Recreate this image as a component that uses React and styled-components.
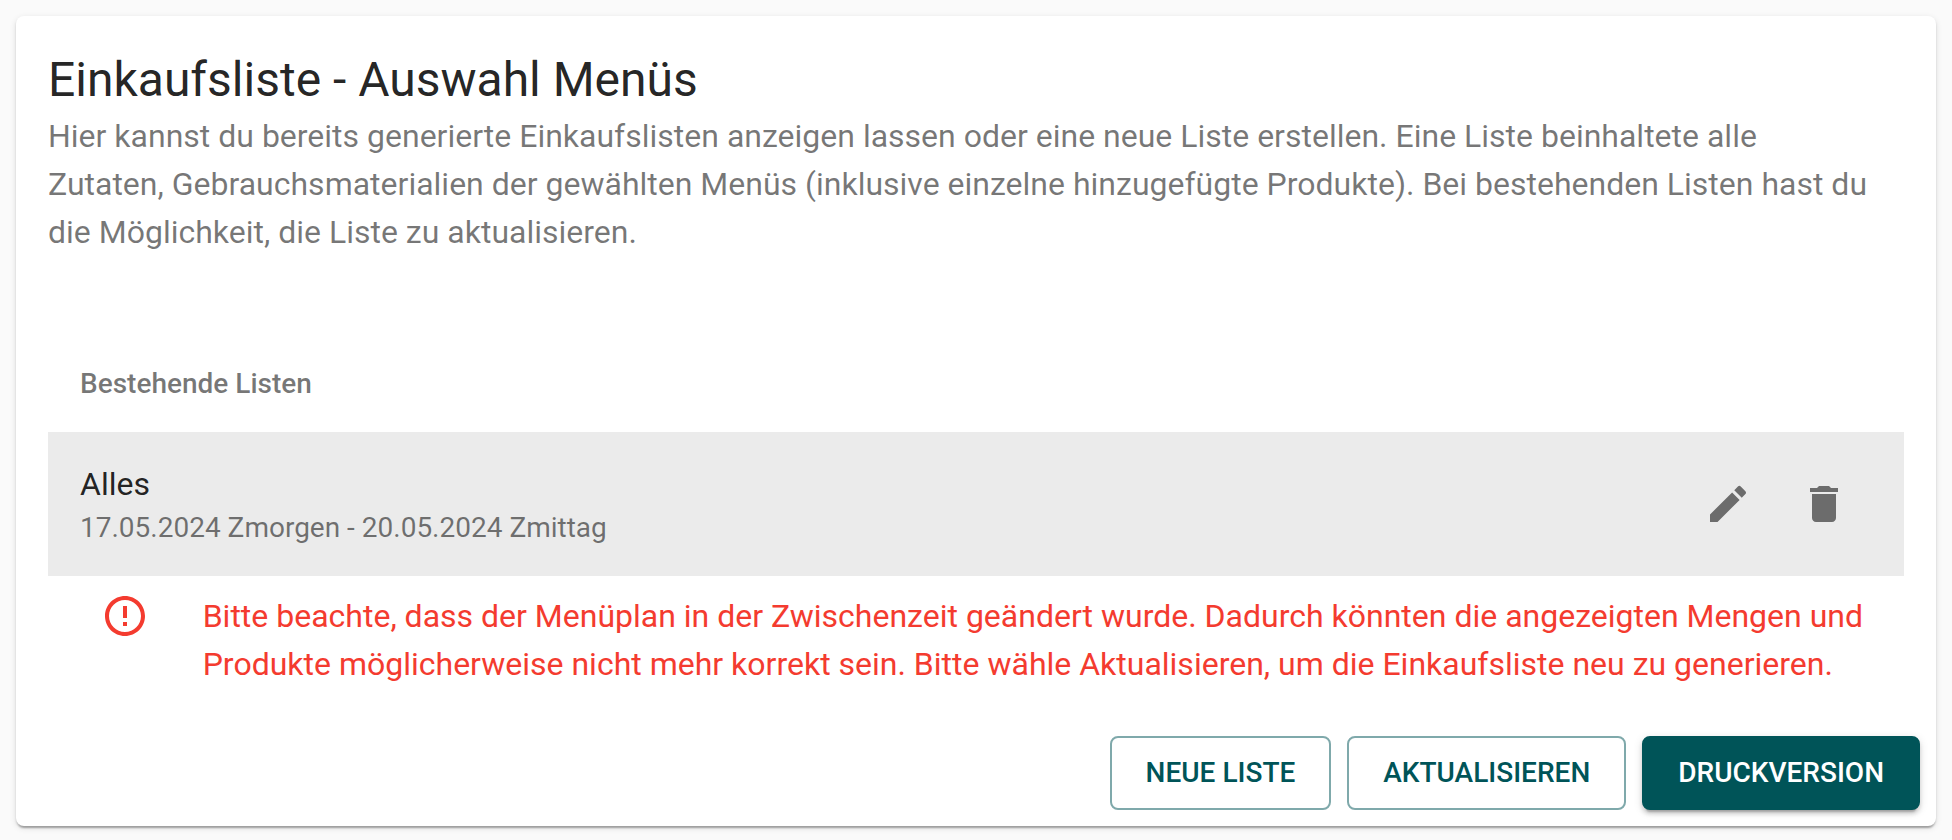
import React from "react";
import styled, { createGlobalStyle, css } from "styled-components";

const GlobalStyle = createGlobalStyle`
  *, *::before, *::after { box-sizing: border-box; }
  body {
    margin: 0;
    background: #fafafa;
    color: rgba(0, 0, 0, 0.87);
    font-family: Roboto, "Liberation Sans", sans-serif;
    font-size: 32px;
    line-height: 48px;
  }
`;

const Page = styled.main`
  padding: 16px;
`;

const Card = styled.section`
  background: #fff;
  border-radius: 8px;
  box-shadow:
    0 4px 2px -2px rgba(0, 0, 0, 0.2),
    0 2px 2px 0 rgba(0, 0, 0, 0.14),
    0 2px 6px 0 rgba(0, 0, 0, 0.12);
`;

const CardContent = styled.div`
  padding: 32px;
`;

const Title = styled.h1`
  margin: 0;
  font-size: 48px;
  font-weight: 400;
  line-height: 64px;
`;

const Description = styled.p`
  margin: 0 0 80px;
  padding-right: 32px;
  color: rgba(0, 0, 0, 0.54);
`;

const ListHeading = styled.h2`
  margin: 0;
  padding: 0 32px;
  color: rgba(0, 0, 0, 0.54);
  font-size: 28px;
  font-weight: 500;
  line-height: 96px;
`;

const List = styled.ul`
  margin: 0;
  padding: 0;
  list-style: none;
`;

const ListItem = styled.li`
  display: flex;
  align-items: center;
  justify-content: space-between;
  padding: 28px 40px 28px 32px;
  background: ${({ $selected }) => ($selected ? "rgba(0, 0, 0, 0.08)" : "transparent")};
`;

const ItemName = styled.div``;

const ItemPeriod = styled.div`
  color: rgba(0, 0, 0, 0.54);
  font-size: 28px;
  line-height: 40px;
`;

const ItemActions = styled.div`
  display: flex;
  gap: 16px;
`;

const IconButton = styled.button`
  display: flex;
  padding: 16px;
  border: 0;
  border-radius: 50%;
  background: none;
  color: rgba(0, 0, 0, 0.54);
  cursor: pointer;
`;

const Icon = styled.svg`
  width: 48px;
  height: 48px;
  fill: currentColor;
`;

const Warning = styled.div`
  display: grid;
  grid-template-columns: 1fr 11fr;
  padding-top: 16px;
  color: #f43b2f;
`;

const WarningIcon = styled.div`
  display: flex;
  justify-content: center;
`;

const WarningText = styled.p`
  margin: 0;
`;

const CardActions = styled.div`
  display: flex;
  flex-wrap: wrap;
  justify-content: flex-end;
  gap: 16px;
  padding: 16px;
`;

const Button = styled.button`
  padding: 10px 34px;
  border: 2px solid rgba(0, 84, 88, 0.5);
  border-radius: 8px;
  background: transparent;
  color: #005458;
  font-family: inherit;
  font-size: 28px;
  font-weight: 500;
  line-height: 50px;
  text-transform: uppercase;
  cursor: pointer;

  ${({ $primary }) =>
    $primary &&
    css`
      border-color: #005458;
      background: #005458;
      color: #fff;
      box-shadow:
        0 6px 2px -4px rgba(0, 0, 0, 0.2),
        0 4px 4px 0 rgba(0, 0, 0, 0.14),
        0 2px 10px 0 rgba(0, 0, 0, 0.12);
    `}
`;

const EditIcon = () => (
  <Icon viewBox="0 0 24 24" aria-hidden="true">
    <path d="M3 17.25V21h3.75L17.81 9.94l-3.75-3.75L3 17.25zM20.71 7.04c.39-.39.39-1.02 0-1.41l-2.34-2.34a.9959.9959 0 0 0-1.41 0l-1.83 1.83 3.75 3.75 1.83-1.83z" />
  </Icon>
);

const DeleteIcon = () => (
  <Icon viewBox="0 0 24 24" aria-hidden="true">
    <path d="M6 19c0 1.1.9 2 2 2h8c1.1 0 2-.9 2-2V7H6v12zM19 4h-3.5l-1-1h-5l-1 1H5v2h14V4z" />
  </Icon>
);

const ErrorOutlineIcon = () => (
  <Icon viewBox="0 0 24 24" aria-hidden="true">
    <path d="M11 15h2v2h-2zm0-8h2v6h-2zm.99-5C6.47 2 2 6.48 2 12s4.47 10 9.99 10C17.52 22 22 17.52 22 12S17.52 2 11.99 2zM12 20c-4.42 0-8-3.58-8-8s3.58-8 8-8 8 3.58 8 8-3.58 8-8 8z" />
  </Icon>
);

const lists = [
  { name: "Alles", period: "17.05.2024 Zmorgen - 20.05.2024 Zmittag", selected: true },
];

export default function App() {
  return (
    <>
      <GlobalStyle />
      <Page>
        <Card>
          <CardContent>
            <Title>Einkaufsliste - Auswahl Menüs</Title>
            <Description>
              Hier kannst du bereits generierte Einkaufslisten anzeigen lassen oder eine neue Liste
              erstellen. Eine Liste beinhaltete alle Zutaten, Gebrauchsmaterialien der gewählten
              Menüs (inklusive einzelne hinzugefügte Produkte). Bei bestehenden Listen hast du die
              Möglichkeit, die Liste zu aktualisieren.
            </Description>
            <ListHeading>Bestehende Listen</ListHeading>
            <List>
              {lists.map(({ name, period, selected }) => (
                <ListItem key={name} $selected={selected}>
                  <div>
                    <ItemName>{name}</ItemName>
                    <ItemPeriod>{period}</ItemPeriod>
                  </div>
                  <ItemActions>
                    <IconButton type="button" aria-label="Bearbeiten">
                      <EditIcon />
                    </IconButton>
                    <IconButton type="button" aria-label="Löschen">
                      <DeleteIcon />
                    </IconButton>
                  </ItemActions>
                </ListItem>
              ))}
            </List>
            <Warning role="alert">
              <WarningIcon>
                <ErrorOutlineIcon />
              </WarningIcon>
              <WarningText>
                Bitte beachte, dass der Menüplan in der Zwischenzeit geändert wurde. Dadurch könnten
                die angezeigten Mengen und Produkte möglicherweise nicht mehr korrekt sein. Bitte
                wähle Aktualisieren, um die Einkaufsliste neu zu generieren.
              </WarningText>
            </Warning>
          </CardContent>
          <CardActions>
            <Button type="button">Neue Liste</Button>
            <Button type="button">Aktualisieren</Button>
            <Button type="button" $primary>
              Druckversion
            </Button>
          </CardActions>
        </Card>
      </Page>
    </>
  );
}
